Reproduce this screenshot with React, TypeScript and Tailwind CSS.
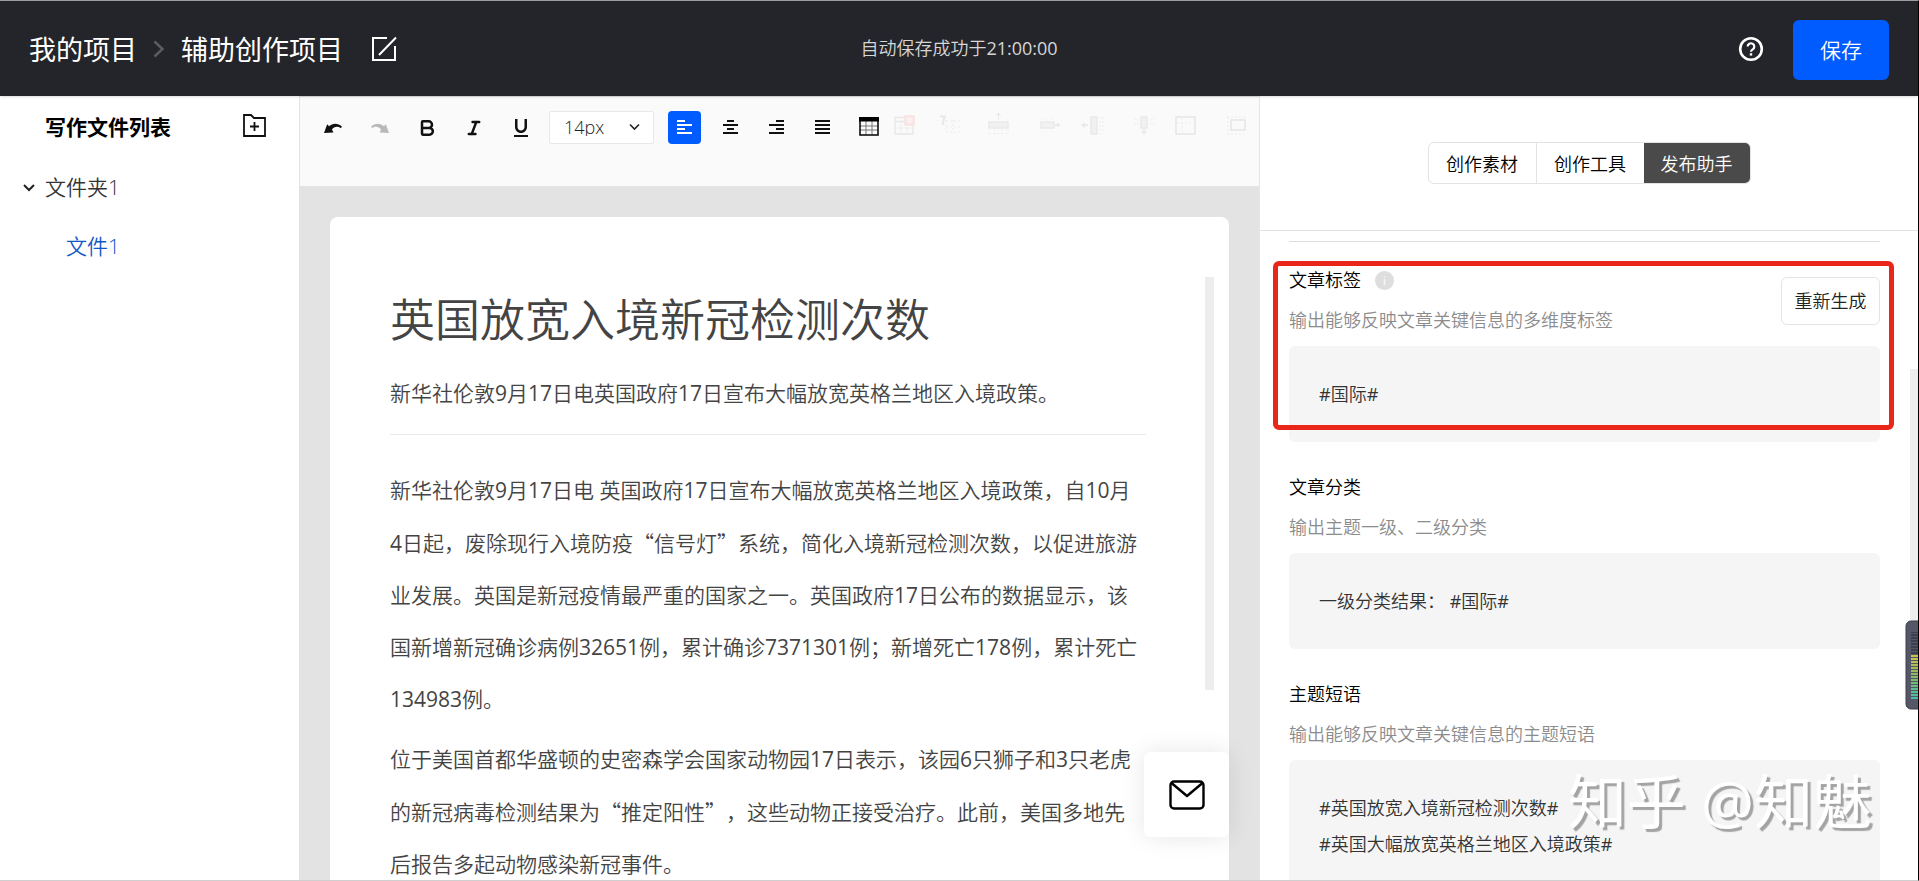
import type { ReactNode } from "react";
import { Bold, Italic } from "lucide-react";
import { MdFormatUnderlined } from "react-icons/md";

const LATIN_CJK = "font-['Open_Sans','Noto_Sans_CJK_SC',sans-serif]";
const CJK = "font-['Noto_Sans_CJK_SC',sans-serif]";

/* Mixed text: figures take the regular Latin weight, quotation marks the full-width CJK form. */
function T({ children }: { children: string }) {
  return (
    <>
      {children.split(/([0-9:#]+|[“”])/).map((part, i) => {
        if (i % 2 === 0) return part;
        return (
          <span key={i} className={/[“”]/.test(part) ? CJK : "font-normal"}>
            {part}
          </span>
        );
      })}
    </>
  );
}

function ToolButton({
  label,
  active,
  disabled,
  children,
}: {
  label: string;
  active?: boolean;
  disabled?: boolean;
  children: ReactNode;
}) {
  return (
    <button
      type="button"
      aria-label={label}
      aria-pressed={active}
      disabled={disabled}
      className={`flex h-[33px] w-[33px] shrink-0 items-center justify-center rounded ${
        active ? "bg-[#005cff] text-white" : "text-[#111]"
      }`}
    >
      {children}
    </button>
  );
}

function AlignIcon({ rows }: { rows: [number, number][] }) {
  return (
    <svg width="15" height="15" viewBox="0 0 15 15" fill="currentColor">
      {rows.map(([x, w], i) => (
        <rect key={i} x={x} y={i * 4} width={w} height="2" />
      ))}
    </svg>
  );
}

function Undo({ flip }: { flip?: boolean }) {
  return (
    <svg width="18" height="12" viewBox="0 0 18 12" fill="currentColor" className={flip ? "-scale-x-100" : ""}>
      <path d="M0 11 3.2 2.2 5 4.200C8.600 1 14 .6 17.800 4.600L17 6.200C13.500 3.800 10 4.600 8 7.400L9.400 10.600Z" />
    </svg>
  );
}

function TableArt({ children }: { children: ReactNode }) {
  return (
    <svg width="33" height="33" viewBox="0 0 33 33" fill="none" stroke="#e8e8e8" strokeWidth="1.300">
      {children}
    </svg>
  );
}

const tableTools: { label: string; art: ReactNode }[] = [
  {
    label: "删除表格",
    art: (
      <>
        <path d="M7 6.500h10M7 10.500h10M7 6v17h18V15M7 23h18" />
        <path d="M13 11v12M19 16v7M7 17h18" strokeWidth=".6" />
        <rect x="17" y="5" width="9" height="9" fill="#fbe9e9" stroke="#f8e0e0" />
        <path d="m19.500 7.500 4 4m0-4-4 4" stroke="#fdf4f4" />
      </>
    ),
  },
  {
    label: "设置表头",
    art: (
      <>
        <path d="M5 5.500h6M9.500 5.500 7.500 14" strokeWidth="2" />
        <path d="M11 10h15M11 16h15M11 21h15M11 9v13M18 9v13" strokeDasharray="2 2" strokeWidth=".8" />
      </>
    ),
  },
  {
    label: "上方插入行",
    art: (
      <>
        <path d="M16.500 2v7M14.500 5l2-3 2 3" strokeWidth="1" />
        <rect x="7" y="11" width="19" height="6" fill="#f1f1f1" />
        <path d="M7 22.500h19M7 18v5M13 18v5M20 18v5M26 18v5" strokeDasharray="2 2" strokeWidth=".7" />
      </>
    ),
  },
  {
    label: "删除行",
    art: (
      <>
        <rect x="12" y="11" width="13" height="6" fill="#f1f1f1" />
        <path d="M26 14h5M28 12.500l2.500 1.500-2.500 1.500" />
        <path d="M12 8h12M12 21h12" strokeDasharray="2 3" strokeWidth=".5" />
      </>
    ),
  },
  {
    label: "左侧插入列",
    art: (
      <>
        <path d="M6 14h6M9 12l-3 2 3 2" />
        <rect x="15" y="6" width="6" height="17" fill="#f1f1f1" />
        <path d="M24 6v17M27 6v17M15 12h6M15 18h6" strokeDasharray="2 2" strokeWidth=".8" />
      </>
    ),
  },
  {
    label: "删除列",
    art: (
      <>
        <rect x="18" y="6" width="6" height="11" fill="#f1f1f1" />
        <path d="M21 17v6M19 20l2 3 2-3" />
        <path d="M12 7v10M15 7v10M28 7v10M31 7v8" strokeDasharray="2 3" strokeWidth=".7" />
      </>
    ),
  },
  {
    label: "合并单元格",
    art: (
      <>
        <rect x="6" y="6" width="19" height="17" strokeWidth="1.600" />
        <path d="M12 7v15M7 12h17" strokeDasharray="2 2" strokeWidth=".7" />
      </>
    ),
  },
  {
    label: "拆分单元格",
    art: (
      <>
        <rect x="14" y="9" width="14" height="10" strokeWidth="1.800" />
        <path d="M10 6h18M10 23h18M11 6v17" strokeDasharray="2 2" strokeWidth=".8" />
      </>
    ),
  },
];

function Toolbar() {
  return (
    <div className="flex h-[89px] items-start bg-[#fafafa] pt-[14px] pl-4">
      <div className="flex gap-[14px]">
        <ToolButton label="撤销">
          <Undo />
        </ToolButton>
        <ToolButton label="重做" disabled>
          <span className="text-[#b9b9b9]">
            <Undo flip />
          </span>
        </ToolButton>
        <ToolButton label="加粗">
          <Bold size={20} strokeWidth={3} />
        </ToolButton>
        <ToolButton label="斜体">
          <Italic size={18} strokeWidth={3.2} />
        </ToolButton>
        <ToolButton label="下划线">
          <MdFormatUnderlined size={24} />
        </ToolButton>
      </div>
      <div className="relative ml-3 h-[33px] w-[105px] shrink-0">
        <select
          aria-label="字号"
          className="h-full w-full appearance-none rounded-xs border border-[#e8e8e8] bg-white pb-0.5 pl-[14px] text-lg leading-none text-[#222]"
        >
          <option>14px</option>
        </select>
        <svg className="pointer-events-none absolute top-3 right-3.5" width="11" height="8" viewBox="0 0 11 8" fill="none" stroke="#222" strokeWidth="1.600">
          <path d="m1 1.500 4.500 4.500L10 1.500" />
        </svg>
      </div>
      <div className="ml-[14px] flex gap-[13px]">
        <ToolButton label="左对齐" active>
          <AlignIcon rows={[[0, 8], [0, 15], [0, 8], [0, 15]]} />
        </ToolButton>
        <ToolButton label="居中对齐">
          <AlignIcon rows={[[4, 7], [0, 15], [4, 7], [0, 15]]} />
        </ToolButton>
        <ToolButton label="右对齐">
          <AlignIcon rows={[[7, 8], [0, 15], [7, 8], [0, 15]]} />
        </ToolButton>
        <ToolButton label="两端对齐">
          <AlignIcon rows={[[0, 15], [0, 15], [0, 15], [0, 15]]} />
        </ToolButton>
      </div>
      <div className="ml-[13px] flex">
        <ToolButton label="插入表格">
          <svg width="20" height="22" viewBox="0 0 20 22" fill="none">
            <path d="M7 4v14M13 4v14M1 9h18M1 13h18" stroke="#777" strokeWidth="1" />
            <rect x="1" y="1" width="18" height="17" stroke="#111" strokeWidth="1.600" />
            <rect x="0" y="0" width="20" height="4.500" fill="#000" />
          </svg>
        </ToolButton>
      </div>
      <div className="ml-[3px] flex gap-[14px]">
        {tableTools.map((t) => (
          <ToolButton key={t.label} label={t.label} disabled>
            <TableArt>{t.art}</TableArt>
          </ToolButton>
        ))}
      </div>
    </div>
  );
}

function Section({
  title,
  desc,
  info,
  children,
}: {
  title: string;
  desc: string;
  info?: boolean;
  children: ReactNode;
}) {
  return (
    <section className="relative mb-[31px] text-lg">
      <div className="flex h-7 items-center gap-[14px]">
        <h2 className="text-black">{title}</h2>
        {info && (
          <svg width="19" height="19" viewBox="0 0 19 19" role="img" aria-label="说明">
            <circle cx="9.500" cy="9.500" r="9.500" fill="#dedede" />
            <path d="M9.500 8v6M9.500 5v1.500" stroke="#f6f6f6" strokeWidth="1.500" />
          </svg>
        )}
      </div>
      <p className="mt-3 h-7 leading-7 text-[#8c8c8c]">{desc}</p>
      <div className="mt-3 rounded-md bg-[#f5f5f5] px-[30px] py-[30px] leading-9 text-[#333]">{children}</div>
      {info && (
        <>
          <button
            type="button"
            className="absolute top-[11px] right-0 h-[48px] w-[99px] rounded-md border border-[#e4e4e4] bg-white text-[#222]"
          >
            重新生成
          </button>
          <div className="pointer-events-none absolute -top-[5px] -right-[14px] -left-4 h-[169px] rounded-md border-5 border-[#ea261b]" />
        </>
      )}
    </section>
  );
}

function LevelWidget() {
  return (
    <svg className="absolute top-[619px] right-0" width="13" height="91" viewBox="0 0 13 91">
      <defs>
        <linearGradient id="lvl" x1="0" y1="0" x2="0" y2="1">
          <stop offset="0" stopColor="#d2c24c" />
          <stop offset=".5" stopColor="#86b866" />
          <stop offset="1" stopColor="#3fc0ad" />
        </linearGradient>
      </defs>
      <path d="M14 1H6a5 5 0 0 0-5 5v78a5 5 0 0 0 5 5h8Z" fill="#555767" stroke="#3c3e4c" />
      <rect x="6" y="12" width="7" height="22" fill="#3c3f4e" />
      <rect x="6" y="34" width="7" height="46" fill="url(#lvl)" />
      {Array.from({ length: 23 }, (_, i) => (
        <rect key={i} x="6" y={13 + i * 3} width="7" height="1" fill="#555767" />
      ))}
    </svg>
  );
}

export default function App() {
  return (
    <div
      className={`relative flex h-screen flex-col overflow-hidden border-t border-r border-b border-t-[#9a9ea2] border-r-black border-b-[#cfcfcf] bg-white font-[350] text-[#333] [text-spacing-trim:space-all] ${LATIN_CJK}`}
    >
      <header className="relative z-10 flex h-[95px] shrink-0 items-center bg-[#24252a] pr-[29px] pl-[29px] text-white shadow-sm">
        <nav className="flex items-center text-[27px] font-normal">
          <a href="#projects" className="pt-1">
            我的项目
          </a>
          <svg className="mx-4" width="12" height="18" viewBox="0 0 12 18" fill="none" stroke="#5b5c61" strokeWidth="2.500">
            <path d="m1.500 1.500 8 7.500-8 7.500" />
          </svg>
          <span className="pt-1">辅助创作项目</span>
          <button type="button" aria-label="重命名" className="ml-7">
            <svg width="26" height="26" viewBox="0 0 26 26" fill="none" stroke="#fff" strokeWidth="2">
              <path d="M16 2H2v22h22V10M8 19 25 1.500" />
            </svg>
          </button>
        </nav>
        <p className="flex-1 pb-0.5 pl-[158px] text-center text-lg text-[#d6d6d6]">
          <T>自动保存成功于21:00:00</T>
        </p>
        <button type="button" aria-label="帮助" className="ml-[375px]">
          <svg width="26" height="26" viewBox="0 0 26 26" fill="none" stroke="#fff">
            <circle cx="13" cy="13" r="10.800" strokeWidth="2.600" />
            <path d="M9.700 10.600a3.300 3.300 0 1 1 5 2.800c-1.200.7-1.700 1.200-1.700 2.400" strokeWidth="2.200" />
            <path d="M13 17.200v2.400" strokeWidth="2.400" />
          </svg>
        </button>
        <button type="button" className="mt-0.5 ml-[29px] h-[60px] w-24 rounded-md bg-[#005cff] pt-0.5 text-[21px]">
          保存
        </button>
      </header>

      <div className="flex min-h-0 flex-1">
        <aside className="w-[300px] shrink-0 border-r border-[#e3e3e3] text-[21px]">
          <div className="flex h-[62px] items-center justify-between pt-px pr-[33px] pl-[45px]">
            <h2 className="font-bold text-black">写作文件列表</h2>
            <button type="button" aria-label="新建文件夹" className="pb-1">
              <svg width="23" height="23" viewBox="0 0 23 23" fill="none" stroke="#111" strokeWidth="1.800">
                <path d="M1 1h7l3 3h11v18H1Z" />
                <path d="M11.500 8v9M7 12.500h9" />
              </svg>
            </button>
          </div>
          <a href="#folder" className="flex h-[59px] items-center gap-[10px] pl-[23px]">
            <svg width="12" height="8" viewBox="0 0 12 8" fill="none" stroke="#222" strokeWidth="2">
              <path d="m1 1 5 5 5-5" />
            </svg>
            文件夹1
          </a>
          <a href="#file" className="flex h-[59px] items-center pl-[66px] text-[#1058c8]">
            文件1
          </a>
        </aside>

        <main className="relative flex min-w-0 flex-1 flex-col bg-[#e3e3e3] pt-px">
          <Toolbar />
          <div className="mx-[30px] mt-[31px] flex min-h-0 flex-1 overflow-hidden rounded-t-lg bg-white pl-[60px] text-[#444]">
            <article className="min-w-0 flex-1 pt-[70px] text-[21px] whitespace-nowrap">
              <h1 className="h-[66px] text-[45px] leading-[66px]">英国放宽入境新冠检测次数</h1>
              <p className="mt-6 border-b border-[#e8e8e8] pb-[25px] leading-8">
                <T>新华社伦敦9月17日电英国政府17日宣布大幅放宽英格兰地区入境政策。</T>
              </p>
              <p className="mt-[29px] leading-[52px]">
                <T>新华社伦敦9月17日电 英国政府17日宣布大幅放宽英格兰地区入境政策，自10月</T>
                <br />
                <T>4日起，废除现行入境防疫“信号灯”系统，简化入境新冠检测次数，以促进旅游</T>
                <br />
                <T>业发展。英国是新冠疫情最严重的国家之一。英国政府17日公布的数据显示，该</T>
                <br />
                <T>国新增新冠确诊病例32651例，累计确诊7371301例；新增死亡178例，累计死亡</T>
                <br />
                <T>134983例。</T>
              </p>
              <p className="mt-2 leading-[52px]">
                <T>位于美国首都华盛顿的史密森学会国家动物园17日表示，该园6只狮子和3只老虎</T>
                <br />
                <T>的新冠病毒检测结果为“推定阳性”，这些动物正接受治疗。此前，美国多地先</T>
                <br />
                <T>后报告多起动物感染新冠事件。</T>
              </p>
            </article>
            <div className="mt-[60px] mr-[15px] ml-[59px] h-[413px] w-[9px] shrink-0 bg-[#ededed]" />
          </div>
          <button
            type="button"
            aria-label="消息"
            className="absolute right-[30px] bottom-[43px] flex h-[85px] w-[85px] items-center justify-center rounded-md bg-white shadow-[0_0_24px_rgba(0,0,0,0.1)]"
          >
            <svg width="36" height="30" viewBox="0 0 36 30" fill="none" stroke="#000" strokeWidth="2.400" strokeLinejoin="round">
              <rect x="1.500" y="1.500" width="33" height="27" rx="3.500" />
              <path d="m2.500 3 15.500 13L33.500 3" />
            </svg>
          </button>
        </main>

        <aside className="flex w-[659px] shrink-0 flex-col border-l border-[#e6e6e6]">
          <div className="flex h-[135px] shrink-0 items-center justify-center border-b border-[#e3e3e3] text-lg text-black" role="tablist">
            <div className="flex h-[42px] overflow-hidden rounded-md border border-[#e3e3e3]">
              <button type="button" role="tab" className="w-[107px] pt-0.5">
                创作素材
              </button>
              <button type="button" role="tab" className="w-[108px] border-l border-[#e3e3e3] pt-0.5">
                创作工具
              </button>
              <button type="button" role="tab" aria-selected="true" className="w-[106px] bg-[#4a4a4a] pt-0.5 text-white">
                发布助手
              </button>
            </div>
          </div>
          <div className="flex min-h-0 flex-1 overflow-hidden">
            <div className="min-w-0 flex-1 pt-[10px] pr-[30px] pl-[29px]">
              <div className="mb-6 h-px bg-[#dedede]" />
              <Section title="文章标签" desc="输出能够反映文章关键信息的多维度标签" info>
                <T>#国际#</T>
              </Section>
              <Section title="文章分类" desc="输出主题一级、二级分类">
                <T>一级分类结果： #国际#</T>
              </Section>
              <Section title="主题短语" desc="输出能够反映文章关键信息的主题短语">
                <p>
                  <T>#英国放宽入境新冠检测次数#</T>
                </p>
                <p>
                  <T>#英国大幅放宽英格兰地区入境政策#</T>
                </p>
              </Section>
            </div>
            <div className="mt-[138px] h-[300px] w-2 shrink-0 bg-[#ededed]" />
          </div>
        </aside>
      </div>

      <LevelWidget />
      <div className="pointer-events-none absolute right-[46px] bottom-[39px] text-[59px] leading-[80px] font-normal whitespace-nowrap text-white [text-shadow:3px_3px_1px_#a3a3a3]">
        知乎 @知魅
      </div>
    </div>
  );
}
